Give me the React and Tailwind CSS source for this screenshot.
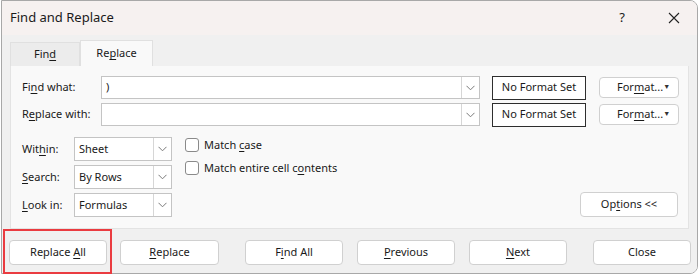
import React from 'react';

const font = { fontFamily: '"Noto Sans", "Open Sans", sans-serif' };

function U({ children }) {
  return <span className="underline underline-offset-2 decoration-1">{children}</span>;
}

function Chevron() {
  return (
    <svg width="9" height="6" viewBox="0 0 9 6" fill="none">
      <path d="M0.5 0.8 L4.5 4.8 L8.5 0.8" stroke="#7a7a7a" strokeWidth="1" />
    </svg>
  );
}

function ComboInput({ value, className }) {
  return (
    <div className={`flex h-[23px] bg-white border border-[#c4c4c4] ${className}`}>
      <div className="flex-1 flex items-center pl-[4px] text-[11px] text-[#1a1a1a]">{value}</div>
      <div className="w-[18px] border-l border-[#d6d6d6] flex items-center justify-center">
        <Chevron />
      </div>
    </div>
  );
}

function Btn({ children, className = '' }) {
  return (
    <div
      className={`h-[25px] flex items-center justify-center bg-white border border-[#d0d0d0] rounded-[4px] text-[11px] text-[#1a1a1a] ${className}`}
    >
      <span>{children}</span>
    </div>
  );
}

function FormatBtn() {
  return (
    <div className="w-[80px] h-[21px] flex items-center justify-between bg-white border border-[#d0d0d0] rounded-[4px] text-[11px] text-[#1a1a1a] pl-[17px] pr-[8px]">
      <span>
        For<U>m</U>at...
      </span>
      <span className="text-[7px] text-[#333]">▼</span>
    </div>
  );
}

function Checkbox({ children }) {
  return (
    <div className="flex items-center h-[14px] gap-[5px] text-[11px] text-[#1a1a1a]">
      <div className="w-[14px] h-[14px] rounded-[3px] border border-[#8a8a8a] bg-white" />
      <span>{children}</span>
    </div>
  );
}

function FormatBox() {
  return (
    <div className="ml-[12px] w-[94px] h-[24px] border-[1.5px] border-[#2e2e2e] bg-white flex items-center justify-center text-[11px] text-[#1a1a1a]">
      No Format Set
    </div>
  );
}

export default function App() {
  return (
    <div className="w-[700px] h-[275px] bg-white relative overflow-hidden" style={font}>
      <div className="ml-[1px] w-[697px] h-[274px] border border-[#a8a8a8] rounded-tr-[8px] rounded-br-[8px] flex flex-col overflow-hidden">
        {/* Title bar */}
        <div className="h-[34px] bg-[#f6f1f0] flex items-center pl-[8px] text-[13px] text-[#1a1a1a]">
          <span className="flex-1">Find and Replace</span>
          <span className="w-[20px] text-center text-[13px] mr-[36px]">?</span>
          <svg width="12" height="12" viewBox="0 0 12 12" className="mr-[17px]">
            <path d="M1 1 L11 11 M11 1 L1 11" stroke="#222" strokeWidth="1.1" />
          </svg>
        </div>

        {/* Body */}
        <div className="flex-1 bg-[#f0f0f0] flex flex-col">
          <div className="flex items-end h-[31px] pl-[8px]">
            <div className="w-[70px] h-[24px] flex items-center justify-center bg-[#ececec] border border-[#e0e0e0] border-b-0 text-[11px] text-[#1a1a1a]">
              <span>
                Fin<U>d</U>
              </span>
            </div>
            <div className="w-[73px] h-[26px] flex items-center justify-center bg-[#f9f9f9] border border-[#e0e0e0] border-b-0 text-[11px] text-[#1a1a1a]">
              <span>
                Re<U>p</U>lace
              </span>
            </div>
          </div>

          <div className="ml-[8px] w-[679px] h-[163px] bg-[#f9f9f9] border border-[#e3e3e3] border-t-0 flex flex-col pt-[10px] pl-[11px]">
            <div className="flex items-center h-[23px]">
              <span className="w-[79px] text-[11px] text-[#1a1a1a]">
                Fi<U>n</U>d what:
              </span>
              <ComboInput value=")" className="w-[379px]" />
              <FormatBox />
              <div className="ml-[13px]">
                <FormatBtn />
              </div>
            </div>
            <div className="flex items-center h-[23px] mt-[4px]">
              <span className="w-[79px] text-[11px] text-[#1a1a1a]">
                R<U>e</U>place with:
              </span>
              <ComboInput value="" className="w-[379px]" />
              <FormatBox />
              <div className="ml-[13px]">
                <FormatBtn />
              </div>
            </div>

            <div className="flex mt-[11px]">
              <div className="flex flex-col gap-[4px]">
                {[
                  [<>Wit<U>h</U>in:</>, 'Sheet'],
                  [<><U>S</U>earch:</>, 'By Rows'],
                  [<><U>L</U>ook in:</>, 'Formulas'],
                ].map(([label, val], i) => (
                  <div key={i} className="flex items-center">
                    <span className="w-[52px] text-[11px] text-[#1a1a1a]">{label}</span>
                    <ComboInput value={val} className="w-[98px] h-[24px]" />
                  </div>
                ))}
              </div>
              <div className="flex flex-col gap-[9px] ml-[13px] pt-[1px]">
                <Checkbox>
                  Match <U>c</U>ase
                </Checkbox>
                <Checkbox>
                  Match entire cell c<U>o</U>ntents
                </Checkbox>
              </div>
              <div className="flex-1 flex items-end justify-end pr-[10px]">
                <Btn className="w-[98px]">
                  Op<U>t</U>ions &lt;&lt;
                </Btn>
              </div>
            </div>
          </div>

          <div className="flex items-center mt-[11px] pl-[7px]">
            <Btn className="w-[98px]">
              Replace <U>A</U>ll
            </Btn>
            <Btn className="w-[99px] ml-[13px]">
              <U>R</U>eplace
            </Btn>
            <Btn className="w-[98px] ml-[26px]">
              F<U>i</U>nd All
            </Btn>
            <Btn className="w-[98px] ml-[14px]">
              <U>P</U>revious
            </Btn>
            <Btn className="w-[98px] ml-[14px] border-[#5b9bd5]">
              <U>N</U>ext
            </Btn>
            <Btn className="w-[98px] ml-[26px]">Close</Btn>
          </div>
        </div>
      </div>

      {/* Highlight box */}
      <div className="absolute left-[3px] top-[229px] w-[109px] h-[45px] border-2 border-[#ea3b40]" />
    </div>
  );
}
